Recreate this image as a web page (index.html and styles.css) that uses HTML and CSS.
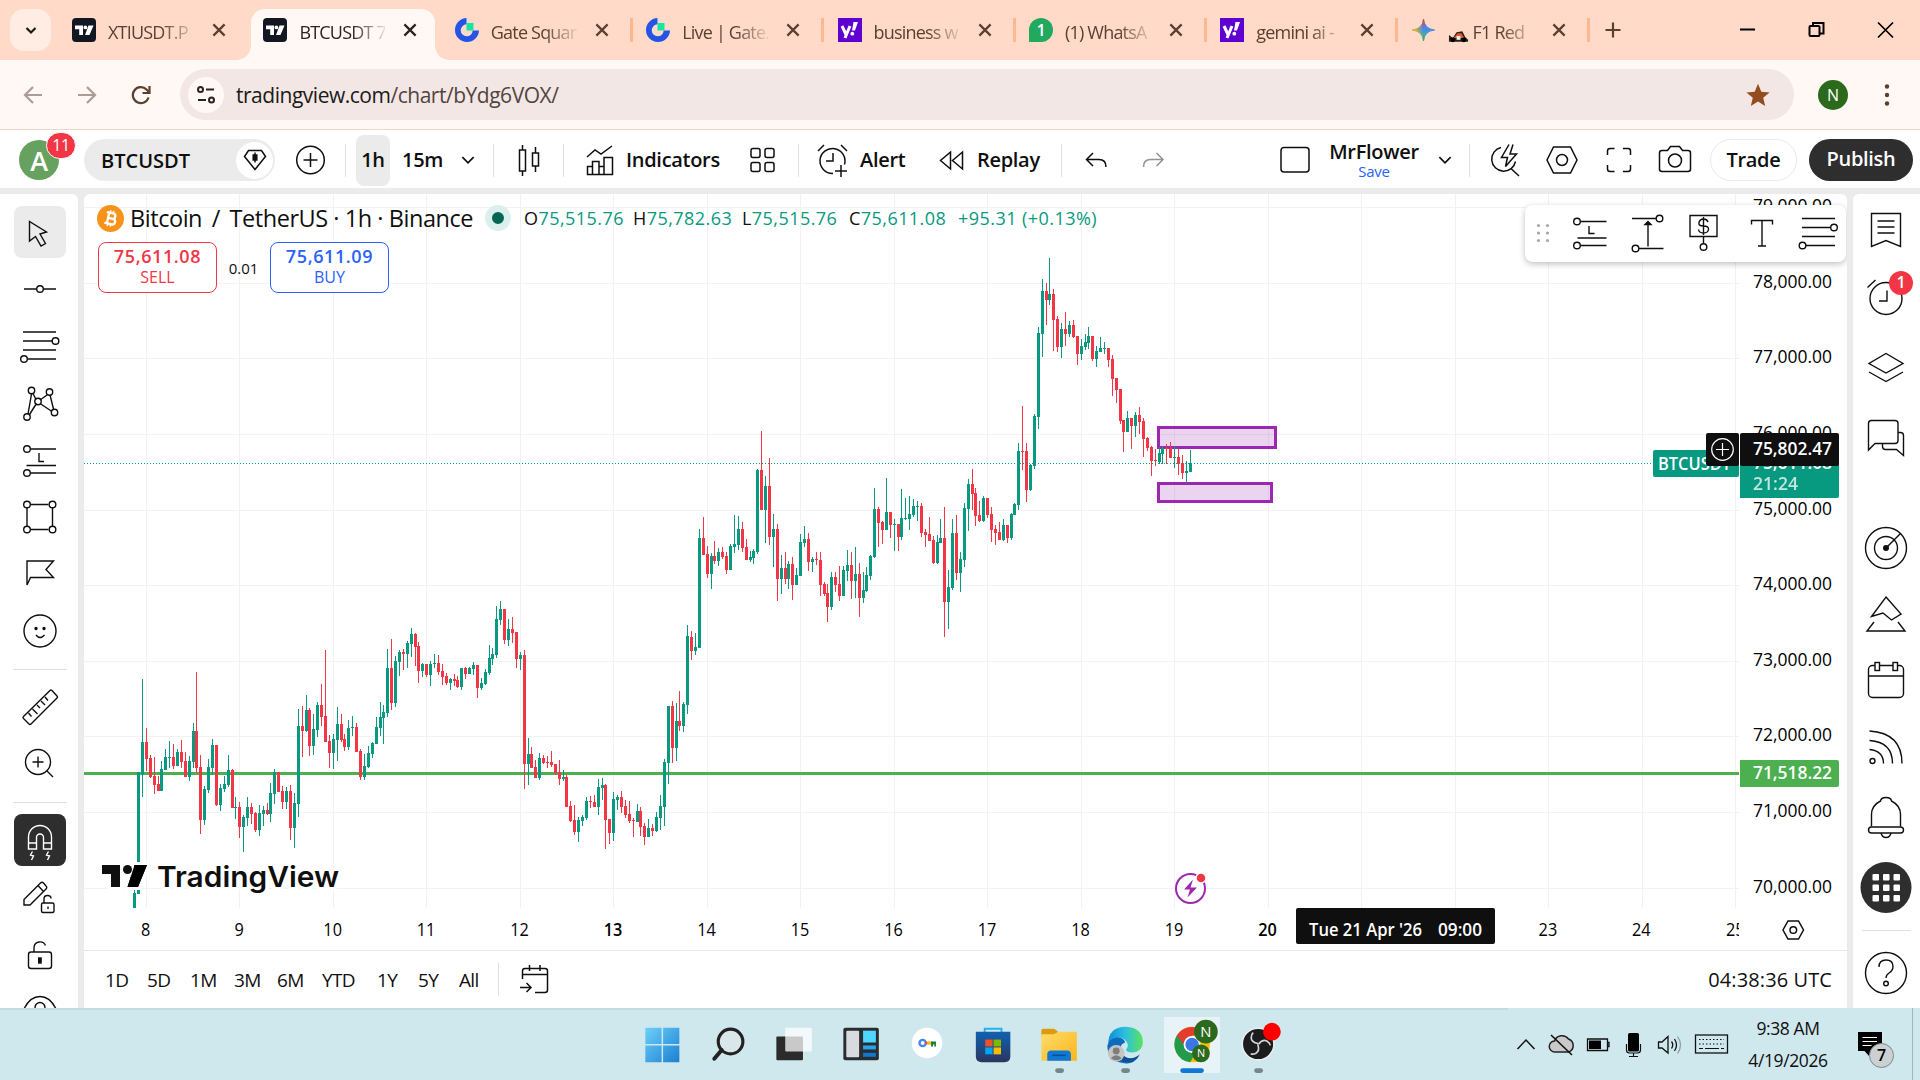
FILE: index.html
```html
<!DOCTYPE html>
<html lang="en">
<head>
    <meta charset="UTF-8">
    <meta name="viewport" content="width=device-width, initial-scale=1.0">
    <title>BTCUSDT 75,611.08</title>
    <link rel="stylesheet" href="styles.css">
</head>
<body>
    <svg class="defs" width="0" height="0">
        <defs>
            <symbol id="tv" viewBox="0 0 24 24">
                <rect width="24" height="24" rx="4" fill="#131722"/>
                <path d="M3 7.500h8v9.500H7.200v-5.700H3zM16.500 7.500H21.500L17.500 17h-4.500z" fill="#fff"/>
                <circle cx="13.400" cy="9.400" r="1.900" fill="#fff"/>
            </symbol>
            <symbol id="gate" viewBox="0 0 24 24">
                <path d="M11.500 0a12 12 0 1 0 12.500 12.500h-6.300A6 6 0 1 1 11.500 6.300z" fill="#2354e6"/>
                <rect x="11.500" y="5" width="7" height="7.500" fill="#17e6a1"/>
            </symbol>
            <symbol id="yahoo" viewBox="0 0 24 24">
                <rect width="24" height="24" fill="#5f01d1"/>
                <path d="M4 8l4 8.500M12 8L7 20" stroke="#fff" stroke-width="3" fill="none"/>
                <path d="M15.500 4h4.500l-3 8.500h-3z" fill="#fff"/>
                <circle cx="14.300" cy="15.700" r="1.900" fill="#fff"/>
            </symbol>
            <symbol id="x" viewBox="0 0 16 16">
                <path d="M3 3l10 10M13 3L3 13" stroke="currentColor" stroke-width="2" fill="none"/>
            </symbol>
            <symbol id="down" viewBox="0 0 16 16">
                <path d="M3 5.500l5 5 5-5" stroke="currentColor" stroke-width="1.500" fill="none"/>
            </symbol>
            <linearGradient id="gem" x1="0" y1="0" x2="0" y2="1">
                <stop offset="0" stop-color="#ea4335"/><stop offset=".4" stop-color="#4285f4"/><stop offset=".7" stop-color="#4aa3b5"/><stop offset="1" stop-color="#34a853"/>
            </linearGradient>
            <linearGradient id="gemL" x1="0" y1="0" x2="1" y2="0">
                <stop offset="0" stop-color="#fbbc04"/><stop offset=".5" stop-color="#fbbc04" stop-opacity="0"/>
            </linearGradient>
            <linearGradient id="win" x1="0" y1="0" x2="1" y2="1">
                <stop offset="0" stop-color="#6cd0fb"/><stop offset="1" stop-color="#1b7fd0"/>
            </linearGradient>
            <linearGradient id="edge" x1="0" y1="0" x2="1" y2="0">
                <stop offset="0" stop-color="#0f8fd8"/><stop offset=".5" stop-color="#2cc0de"/><stop offset="1" stop-color="#5be35a"/>
            </linearGradient>
            <linearGradient id="bag" x1="0" y1="0" x2="0" y2="1">
                <stop offset="0" stop-color="#0f62b0"/><stop offset="1" stop-color="#2a3560"/>
            </linearGradient>
            <linearGradient id="folder" x1="0" y1="0" x2="1" y2="1">
                <stop offset="0" stop-color="#ffdc6b"/><stop offset="1" stop-color="#fbb51c"/>
            </linearGradient>
        </defs>
    </svg>

    <div class="tabstrip">
        <div class="tab-search"><svg width="20" height="20" viewBox="0 0 20 20"><path d="M5.500 8l4.500 4.500L14.500 8" stroke="#1f1a17" stroke-width="2.200" fill="none"/></svg></div>
        <div class="tab"><svg class="fav"><use href="#tv"/></svg><span class="tab-title">XTIUSDT.P</span><svg class="close"><use href="#x"/></svg></div>
        <div class="tab active"><svg class="fav"><use href="#tv"/></svg><span class="tab-title">BTCUSDT 7</span><svg class="close"><use href="#x"/></svg></div>
        <div class="tab divided"><svg class="fav"><use href="#gate"/></svg><span class="tab-title">Gate Squar</span><svg class="close"><use href="#x"/></svg></div>
        <div class="tab divided"><svg class="fav"><use href="#gate"/></svg><span class="tab-title">Live | Gate.</span><svg class="close"><use href="#x"/></svg></div>
        <div class="tab divided"><svg class="fav"><use href="#yahoo"/></svg><span class="tab-title">business w</span><svg class="close"><use href="#x"/></svg></div>
        <div class="tab divided"><svg class="fav" viewBox="0 0 24 24"><path d="M0 24V12A12 12 0 1 1 12 24z" fill="#20a95f"/><text x="12" y="18" class="wa-num">1</text></svg><span class="tab-title">(1) WhatsA</span><svg class="close"><use href="#x"/></svg></div>
        <div class="tab divided"><svg class="fav"><use href="#yahoo"/></svg><span class="tab-title">gemini ai -</span><svg class="close"><use href="#x"/></svg></div>
        <div class="tab divided">
            <svg class="fav" viewBox="0 0 24 24"><path d="M11.500 1Q12.500 11 22.500 12 12.500 13 11.500 23 10.500 13 .5 12 10.500 11 11.500 1z" fill="url(#gem)" stroke="url(#gem)"/><path d="M11.500 1Q12.500 11 22.500 12 12.500 13 11.500 23 10.500 13 .5 12 10.500 11 11.500 1z" fill="url(#gemL)" stroke="url(#gemL)"/></svg>
            <span class="tab-title"><svg class="car" viewBox="0 0 22 14"><path d="M1 11V6l4 3 4-6 6-1 3 6 3 3v2H1z" fill="#222"/><path d="M6 9l4-5 4 0 3 5z" fill="#e8592b"/><path d="M9 7h4v4H9z" fill="#f5f0ec"/><circle cx="5" cy="11" r="2.500"/><circle cx="16.500" cy="11" r="2.500"/></svg> F1 Red</span>
            <svg class="close"><use href="#x"/></svg>
        </div>
        <div class="new-tab"><svg width="20" height="20" viewBox="0 0 20 20"><path d="M10 2.500v15M2.500 10h15" stroke="#5b4032" stroke-width="2.200"/></svg></div>
        <div class="win-buttons">
            <svg width="69" height="60" viewBox="0 0 69 60"><path d="M27 29.500h15" stroke="#000" stroke-width="2"/></svg>
            <svg width="69" height="60" viewBox="0 0 69 60" fill="none" stroke="#000" stroke-width="2"><rect x="27.500" y="26" width="10" height="10" rx="1"/><path d="M31 25.500V23h10.500v10.500H38"/></svg>
            <svg width="69" height="60" viewBox="0 0 69 60"><path d="M27 22.500l15 15M42 22.500l-15 15" stroke="#000" stroke-width="1.700"/></svg>
        </div>
    </div>

    <div class="urlbar">
        <svg width="54" height="40" viewBox="0 0 54 40" class="nav off"><path d="M42 20H25M33 12l-8 8 8 8"/></svg>
        <svg width="54" height="40" viewBox="0 0 54 40" class="nav off"><path d="M24 20h17M33 12l8 8-8 8"/></svg>
        <svg width="54" height="40" viewBox="0 0 54 40" class="nav"><path d="M40.500 22.500A8 8 0 1 1 38.500 14.500L41 17"/><path d="M41.500 11v7h-7"/></svg>
        <div class="omnibox">
            <div class="site-info"><svg width="22" height="20" viewBox="0 0 22 20"><g fill="none" stroke="#2b2320" stroke-width="2"><circle cx="5.500" cy="4.500" r="2.500"/><path d="M11 4.500h8M3 15h8"/><circle cx="16.500" cy="15" r="2.500"/></g></svg></div>
            <span class="url"><b>tradingview.com</b>/chart/bYdg6VOX/</span>
            <svg class="star" width="24" height="24" viewBox="0 0 24 24"><path d="M12 .8l3.300 8 8.300.6-6.400 5.400 2 8.300L12 18.600l-7.200 4.500 2-8.300L.4 9.400l8.300-.6z" fill="#924c1e"/></svg>
        </div>
        <div class="profile">N</div>
        <svg width="10" height="24" viewBox="0 0 10 24" fill="#5b4032"><circle cx="5" cy="3.500" r="2.200"/><circle cx="5" cy="12" r="2.200"/><circle cx="5" cy="20.500" r="2.200"/></svg>
    </div>

    <div class="header">
        <div class="avatar-cell"><div class="avatar">A</div><span class="badge">11</span></div>
        <div class="symbol">BTCUSDT<span class="gem"><svg width="26" height="26" viewBox="0 0 26 26" class="ico"><path d="M6.500 3.500h13l4 6L13 22.500 2.500 9.500z"/><path d="M13 5.500v10"/><rect x="11.200" y="8" width="3.600" height="5" fill="#0f0f0f"/></svg></span></div>
        <svg class="ico w70" viewBox="0 0 70 40"><circle cx="35.500" cy="20" r="13.800"/><path d="M35.500 13v14M28.500 20h14"/></svg>
        <i class="sep"></i>
        <span class="interval">1h</span>
        <span class="t-15">15m</span>
        <svg class="ico w18" viewBox="0 0 16 16"><use href="#down"/></svg>
        <i class="sep s2"></i>
        <svg class="ico w69" viewBox="0 0 69 40"><path d="M28.500 5v5M28.500 31v5M25.500 10h6v21h-6zM41.500 7v6M41.500 26v6M38.500 13h6v13h-6z"/></svg>
        <i class="sep"></i>
        <svg class="ico w28 ind" viewBox="0 0 28 32"><path d="M1 13l8-7 6 4L26 2M1.500 30.500v-8h5v-5h6.500v5h5v-9h8.500v17zM6.500 30.500v-8M13 30.500v-8M18 30.500v-8"/></svg>
        <span class="t-ind">Indicators</span>
        <svg class="ico w86" viewBox="0 0 86 40"><rect x="31" y="8.500" width="9" height="9" rx="2"/><rect x="45" y="8.500" width="9" height="9" rx="2"/><rect x="31" y="22.500" width="9" height="9" rx="2"/><rect x="45" y="22.500" width="9" height="9" rx="2"/></svg>
        <i class="sep"></i>
        <svg class="ico w34 al" viewBox="0 0 34 34"><path d="M17 30.500a12.500 12.500 0 1 1 11.500-9M17 10v8h-7M2 8l6-6M25 2l6 6M25 22v12M19 28h12"/></svg>
        <span class="t-alert">Alert</span>
        <svg class="ico w28" viewBox="0 0 28 32"><path d="M12.500 8v17L2.500 16.500zM24.500 8v17L14.500 16.500z"/></svg>
        <span class="t-replay">Replay</span>
        <i class="sep"></i>
        <svg class="ico w70" viewBox="0 0 70 40"><path d="M31 13l-6.500 6.500 6.500 6.500M24.500 19.500H37q7 0 7 7.500"/></svg>
        <svg class="ico w40 dim" viewBox="0 0 40 40"><path d="M24.500 13l6.500 6.500-6.500 6.500M31 19.500H18.500q-7 0-7 7.500"/></svg>
        <span class="grow"></span>
        <svg class="ico w34b" viewBox="0 0 34 34"><rect x="3" y="4.500" width="28" height="24.500" rx="3"/></svg>
        <div class="layout-name"><span>MrFlower</span><small>Save</small></div>
        <svg class="ico w18 ch2" viewBox="0 0 16 16"><use href="#down"/></svg>
        <i class="sep s3"></i>
        <svg class="ico w69c" viewBox="0 0 69 40"><path d="M32 7.500a12 12 0 1 0 14.500 14M42.500 29l7.500 7M40 4.500l-7.500 13h6l-2 9L47.500 14h-6.500l3-9.500"/></svg>
        <svg class="ico w50" viewBox="0 0 50 40"><path d="M16.500 7h17L40 20l-6.500 13h-17L10 20z"/><circle cx="25" cy="20" r="5.500"/></svg>
        <svg class="ico w64" viewBox="0 0 64 40"><path d="M20.500 15v-4q0-2.500 2.500-2.500h4.500M36 8.500h5q2.500 0 2.500 2.500v4M43.500 25v4q0 2.500-2.500 2.500h-5M27.500 31.500H23q-2.500 0-2.500-2.500v-4"/></svg>
        <svg class="ico w50b" viewBox="0 0 50 40"><path d="M9.500 13q0-2.500 2.500-2.500h5.500l3-4h9l3 4H38q2.500 0 2.500 2.500v16q0 2.500-2.500 2.500H12q-2.500 0-2.500-2.500z"/><circle cx="25" cy="20.500" r="6.500"/></svg>
        <span class="trade">Trade</span>
        <span class="publish">Publish</span>
    </div>

    <div class="workspace">
        <div class="left-tools">
            <svg class="sel" viewBox="0 0 52 52"><path d="M15.500 15.500v19.500l6-4.500 5.500 9.500 4.500-2.500-5.500-9.500 6.500-2z"/></svg>
            <svg viewBox="0 0 52 52"><path d="M10 26h12.500M29.500 26H42"/><circle cx="26" cy="26" r="3.300"/></svg>
            <svg viewBox="0 0 52 52"><path d="M9 12h33M9 21h29.500M9 30h33M13.500 39H42"/><circle cx="41.500" cy="21" r="3.300"/><circle cx="10" cy="39" r="3.300"/></svg>
            <svg viewBox="0 0 52 52"><path d="M17.500 17L14 37M19 16.500l3 6M26 23l7-5M36 18l3.500 14M15.500 37.500l7-11M26 26.500l12 8"/><circle cx="17.500" cy="13.500" r="3.200"/><circle cx="35.500" cy="15" r="3.200"/><circle cx="24" cy="24.500" r="3.200"/><circle cx="13" cy="40" r="3.200"/><circle cx="40.500" cy="35.500" r="3.200"/></svg>
            <svg viewBox="0 0 52 52"><path d="M16.500 15H42M12.500 31.500H42M16.500 39H42M25 19v8.500h5"/><circle cx="13" cy="15" r="3.300"/><circle cx="13" cy="39" r="3.300"/></svg>
            <svg viewBox="0 0 52 52"><path d="M16.500 13.500h18M13 17v18M38.500 17v18M16.500 38.500h18"/><circle cx="13" cy="13.500" r="3.300"/><circle cx="38.500" cy="13.500" r="3.300"/><circle cx="13" cy="38.500" r="3.300"/><circle cx="38.500" cy="38.500" r="3.300"/></svg>
            <svg viewBox="0 0 52 52"><path d="M13 13h26.500l-7.500 8.500 7.500 8H16.500L13 37z"/></svg>
            <svg viewBox="0 0 52 52"><circle cx="26" cy="26" r="16"/><path d="M22 30q4 5 8.500 0"/><circle cx="22" cy="23.500" r="1" class="dot"/><circle cx="30" cy="23.500" r="1" class="dot"/></svg>
            <i></i>
            <svg viewBox="0 0 52 52"><path d="M9.500 35.500L36 9.500q1-1 2 0l5 5.500q1 1 0 2L17 43q-1 1-2 0l-5.500-5.500q-1-1 0-2zM14.500 32l3 3.500M18.500 28l5 5M23 24l3 3M27 20l4 4M31 16l3 3.500"/></svg>
            <svg viewBox="0 0 52 52"><circle cx="24" cy="24" r="12.500"/><path d="M33 33l6 6M24 18.500v11M18.500 24h11"/></svg>
            <i></i>
            <svg class="sel dark" viewBox="0 0 52 52"><path d="M14.500 35V23a11.500 11.500 0 0 1 23 0v12h-8V23.500a3.500 3.500 0 0 0-7 0V35zM14.500 29h8M29.500 29h8M18.500 37.500l-2 3.500 3 1-2 4M34.500 37.500l-2 3.500 3 1-2 4"/></svg>
            <svg viewBox="0 0 52 52"><path d="M10 34v-5.500L26.500 12q1.500-1.500 3 0l2.500 3q1.500 1.500 0 3L16 34zM24 14.500l5.500 6"/><rect x="27.500" y="32" width="12.500" height="9.500" rx="1.500"/><path d="M30 32v-4q0-3.500 3.500-3.500T37 27.500M34 35.500v2.500"/></svg>
            <svg viewBox="0 0 52 52"><rect x="14.500" y="24" width="23" height="16.500" rx="2.500"/><path d="M20 24v-4.500a6 6 0 0 1 11.500-2"/><rect x="24.700" y="30" width="2.400" height="5" class="dot"/></svg>
            <svg viewBox="0 0 52 52"><path d="M10 24q6-12.500 16-12.500T42 24q-6 12-16 12T10 24z"/><circle cx="26" cy="22.500" r="5"/></svg>
        </div>

        <div class="chart">
            <svg id="plot" width="1763" height="756" viewBox="84 194 1763 756"></svg>
            <div class="legend">
                <svg width="27" height="27" viewBox="0 0 27 27"><circle cx="13.500" cy="13.500" r="13.500" fill="#f7931a"/><g transform="rotate(13 13.500 13.500)" fill="none" stroke="#fff" stroke-width="2.300"><path d="M11 8v11M8.500 8h6.500a2.700 2.700 0 0 1 0 5.400H11h5a2.800 2.800 0 0 1 0 5.600H8.500"/><path d="M12 5.500V8M15 5.500V8M12 19v2.500M15 19v2.500" stroke-width="1.600"/></g></svg>
                <span class="pair">Bitcoin <i>/</i> TetherUS · 1h · Binance</span>
                <span class="live"></span>
                <span class="ohlc">O<em>75,515.76</em></span><span class="ohlc">H<em>75,782.63</em></span><span class="ohlc l">L<em>75,515.76</em></span><span class="ohlc">C<em>75,611.08</em></span><span class="ohlc"><em>+95.31 (+0.13%)</em></span>
            </div>
            <div class="order">
                <div class="sell"><b>75,611.08</b>SELL</div>
                <span>0.01</span>
                <div class="buy"><b>75,611.09</b>BUY</div>
            </div>
            <div class="float-tools">
                <svg class="grip" viewBox="0 0 36 57"><g fill="#a8a8a8"><circle cx="13.500" cy="20.500" r="1.600"/><circle cx="22.500" cy="20.500" r="1.600"/><circle cx="13.500" cy="28" r="1.600"/><circle cx="22.500" cy="28" r="1.600"/><circle cx="13.500" cy="35.500" r="1.600"/><circle cx="22.500" cy="35.500" r="1.600"/></g></svg>
                <svg viewBox="0 0 57 57"><path d="M19.500 16.500h26M16.500 33h29M19.500 40.500h26M28 21v7.500h5.500"/><circle cx="16" cy="16.500" r="3.300"/><circle cx="16" cy="40.500" r="3.300"/></svg>
                <svg viewBox="0 0 57 57"><path d="M14 13.500h24.500M21 43.500h24.500M30 41.500V18"/><path d="M27 19.500h6L30 16.500z" class="dot"/><circle cx="41.500" cy="13.500" r="3.300"/><circle cx="17.500" cy="43.500" r="3.300"/></svg>
                <svg viewBox="0 0 57 57"><path d="M15 10.500h27v21H15zM28.500 31.500v7"/><circle cx="28.500" cy="42" r="3.300"/><path d="M33 17q-1-3-4.500-3t-4.500 3.500 4.500 3.500 5 3.500-5 3.500-5-3.500M28.500 12v18"/></svg>
                <svg viewBox="0 0 57 57"><path d="M19.500 19.500v-4h21v4M30 15.500V41M26 41h8"/></svg>
                <svg viewBox="0 0 57 57"><path d="M13 13.500h33M13 22.500h28.500M13 31.500h33M17 40.500h29"/><circle cx="45" cy="22.500" r="3.300"/><circle cx="13.500" cy="40.500" r="3.300"/></svg>
            </div>
            <div class="bottom-bar">
                <div class="ranges"><span>1D</span><span>5D</span><span>1M</span><span>3M</span><span>6M</span><span>YTD</span><span>1Y</span><span>5Y</span><span>All</span></div>
                <i class="sep"></i>
                <svg width="30" height="30" viewBox="0 0 30 30" class="ico"><path d="M3.500 14V6q0-2.500 2.500-2.500h20q2.500 0 2.500 2.500v19q0 2.500-2.500 2.500h-10M3.500 9.500h25M10.500 0v6M21 0v6M1 22.500h11M7.500 18l4.500 4.500L7.500 27"/></svg>
                <span class="clock">04:38:36 UTC</span>
            </div>
        </div>

        <div class="right-tools">
            <svg viewBox="0 0 67 68"><path d="M18.500 17.500h29v33L33 44.500l-14.500 6zM24.500 25h17M24.500 31h17M24.500 37h17"/></svg>
            <div class="alarm"><svg viewBox="0 0 67 68"><circle cx="33" cy="34.500" r="16"/><path d="M34 26.500v10.500h-8M14.500 23.500l8-7.500"/></svg><b>1</b></div>
            <svg viewBox="0 0 67 68"><path d="M33 21.500l17 10-17 9.500-17-9.500zM16 40l17 9.500L50 40"/></svg>
            <svg viewBox="0 0 67 68"><path d="M15.500 50V23.500q0-3 3-3H42q3 0 3 3v17q0 3-3 3H22zM45 32.500h2.500q3 0 3 3V55.500l-7-6H32.500q-3 0-3-3v-3"/></svg>
            <i class="gap"></i>
            <svg viewBox="0 0 67 68"><circle cx="33" cy="34" r="20.500"/><circle cx="33" cy="34" r="11.500"/><circle cx="33" cy="34" r="2.300" class="dot"/><path d="M33 34l14.500-14.500"/></svg>
            <svg viewBox="0 0 67 68"><path d="M33 15l15 17-9.500 6-8.500-7-11.500 3.500zM21 40l-7 9h38l-7-9"/></svg>
            <svg viewBox="0 0 67 68"><rect x="15.500" y="16.500" width="35" height="32" rx="4"/><path d="M15.500 27h35"/><rect x="22" y="13.500" width="4.500" height="8" fill="#fff"/><rect x="40" y="13.500" width="4.500" height="8" fill="#fff"/></svg>
            <svg viewBox="0 0 67 68"><path d="M16.500 14Q49 16 49 46.500M16.500 23.500Q39.500 25 39.500 46.500M16.500 32.500Q30.500 34 30.500 46.500"/><circle cx="19.500" cy="44" r="2.500"/></svg>
            <svg viewBox="0 0 67 68"><path d="M18.500 42.500V30.500q0-9 9-13.500.5-3.500 5.500-3.500t5.500 3.500q9 4.500 9 13.500v12"/><rect x="15.500" y="43" width="35" height="6" rx="3"/><path d="M28 49q1 4.500 5 4.500t5-4.500"/></svg>
            <svg viewBox="0 0 67 68"><circle cx="33" cy="35.500" r="25.500" fill="#2e2e2e" stroke="none"/><g fill="#fff" stroke="none"><rect x="19.500" y="22" width="6.500" height="6.500" rx="1"/><rect x="30" y="22" width="6.500" height="6.500" rx="1"/><rect x="40.500" y="22" width="6.500" height="6.500" rx="1"/><rect x="19.500" y="32.500" width="6.500" height="6.500" rx="1"/><rect x="30" y="32.500" width="6.500" height="6.500" rx="1"/><rect x="40.500" y="32.500" width="6.500" height="6.500" rx="1"/><rect x="19.500" y="43" width="6.500" height="6.500" rx="1"/><rect x="30" y="43" width="6.500" height="6.500" rx="1"/><rect x="40.500" y="43" width="6.500" height="6.500" rx="1"/></g></svg>
            <i class="line"></i>
            <svg viewBox="0 0 67 68"><circle cx="33" cy="34" r="20.500"/><path d="M26 28q0-7 7-7t7 6.500q0 4-4 6.500-3 2-3 5"/><circle cx="33" cy="44.500" r="2.300"/></svg>
        </div>
    </div>

    <div class="taskbar">
        <div class="apps">
            <svg viewBox="0 0 66 72"><g fill="url(#win)"><path d="M16 20h16.500v16.500H16zM34 20h16.500v16.500H34zM16 38h16.500v17H16zM34 38h16.500v17H34z"/></g></svg>
            <svg viewBox="0 0 66 72"><circle cx="35.500" cy="34" r="12.500" fill="#d9e6ea" stroke="#222" stroke-width="3.200"/><path d="M26.500 42.500L19 51.500" stroke="#222" stroke-width="4" stroke-linecap="round"/></svg>
            <svg viewBox="0 0 66 72"><rect x="15" y="29" width="27" height="24" rx="1" fill="#2b2b2b"/><rect x="24" y="20" width="27" height="24" rx="1" fill="#fff" fill-opacity=".75"/></svg>
            <svg viewBox="0 0 66 72"><rect x="15" y="20" width="36" height="33" rx="2" fill="#2a2d30"/><rect x="18" y="23" width="13" height="27" rx="1" fill="#d8dadf"/><rect x="35" y="23" width="13" height="12" fill="#4fd6ff"/><rect x="35" y="38" width="13" height="4" fill="#29a4e6"/><rect x="35" y="45.500" width="13" height="4" fill="#0f78d4"/></svg>
            <svg viewBox="0 0 66 72"><circle cx="33" cy="35.500" r="15.500" fill="#fff"/><circle cx="28.500" cy="35.500" r="3.200" fill="none" stroke="#4285f4" stroke-width="2.400"/><path d="M31 35.500h5" stroke="#ea4335" stroke-width="2.500"/><path d="M33 35.500h6" stroke="#fbbc04" stroke-width="3"/><path d="M37 34h5v5h-1.700v-2h-1.300v2h-2z" fill="#188038"/></svg>
            <svg viewBox="0 0 66 72"><path d="M24.500 25v-4h17v4" fill="none" stroke="#25b2ee" stroke-width="2"/><path d="M15.500 24h35v25q0 6-6 6h-23q-6 0-6-6z" fill="url(#bag)"/><path d="M25 32h7.500v7H25z" fill="#f25022"/><path d="M33.500 32H41v7h-7.500z" fill="#7fba00"/><path d="M25 40h7.500v7H25z" fill="#00a4ef"/><path d="M33.500 40H41v7h-7.500z" fill="#ffb900"/></svg>
            <svg viewBox="0 0 66 72"><path d="M15 23q0-2 2-2h11l4 3v6H15z" fill="#dd9a0a"/><path d="M15 26.500h13l4-2.500h19v29.500H15z" fill="url(#folder)"/><path d="M21 53.500V47q0-4 4-4h16q4 0 4 4v6.500z" fill="#0f78d4"/><path d="M26 48h14" stroke="#0a4d91" stroke-width="1.500"/><rect x="29" y="61" width="9" height="5" rx="2.500" fill="#75868b"/></svg>
            <svg viewBox="0 0 66 72"><path d="M16 38Q15 19 34 19q17 1 17 16 0 9-10 10-7 0-7-3 3-3 1-7-4-7-12-4-5 2-7 7z" fill="url(#edge)"/><path d="M15 38q2-7 10-8 7 0 8 5-8 3-3 11 6 9 17 3-6 9-15 7Q15 54 15 38z" fill="#0f6cbd"/><path d="M29 38q-3 8 4 12 8 3 15-3-4 8-12 8-10 0-13-8 0-8 6-9z" fill="#134d93"/><circle cx="24" cy="46" r="8.500" fill="#c5c5c5"/><circle cx="24" cy="43.500" r="3.500" fill="#7d7d7d"/><path d="M18.500 51q5.500-6 11 0-5 4-11 0z" fill="#7d7d7d"/><rect x="29" y="61" width="9" height="5" rx="2.500" fill="#75868b"/></svg>
            <div class="app-on"><svg viewBox="0 0 66 72"><circle cx="33" cy="37" r="18" fill="#fbbc04"/><path d="M17.500 28A18 18 0 0 0 31 55l7-12-5-6z" fill="#229a4c"/><path d="M33 28h15.500A18 18 0 0 0 17.500 28l8 10z" fill="#e33b2e"/><circle cx="33" cy="37" r="8.600" fill="#fff"/><circle cx="33" cy="37" r="6.800" fill="#3b78e7"/><circle cx="47" cy="24" r="12" fill="#2b6a1d"/><text x="47" y="29" class="n1">N</text><circle cx="42" cy="46" r="9" fill="#2b6a1d"/><text x="42" y="50" class="n2">N</text><rect x="21" y="61" width="24" height="5" rx="2.500" fill="#0f78d4"/></svg></div>
            <svg viewBox="0 0 66 72"><circle cx="33" cy="36.500" r="16" fill="#1c1b1d" stroke="#eee" stroke-width="1.500"/><g fill="none" stroke="#d5d5d5" stroke-width="1.700"><path d="M33 36q-7-1-7-6 0-3 2-5"/><path d="M33 36q-7-1-7-6 0-3 2-5" transform="rotate(120 33 36.500)"/><path d="M33 36q-7-1-7-6 0-3 2-5" transform="rotate(240 33 36.500)"/></g><circle cx="47" cy="24" r="9" fill="#f00"/><rect x="29" y="61" width="9" height="5" rx="2.500" fill="#75868b"/></svg>
        </div>
        <div class="tray">
            <svg viewBox="0 0 36 36"><path d="M9.500 23l8.500-9 8.500 9" fill="none" stroke="#111" stroke-width="1.500"/></svg>
            <svg viewBox="0 0 36 36"><path d="M11 26a5.500 5.500 0 0 1-.5-11 8 8 0 0 1 14-2 7 7 0 0 1 .5 13z" fill="#c9c9c9" stroke="#222" stroke-width="1.500"/><path d="M7 9l21 20" stroke="#111" stroke-width="1.600"/></svg>
            <svg viewBox="0 0 36 36"><path d="M7.500 13h20v11.500h-20zM27.500 16.500h1.500v4h-1.500" fill="none" stroke="#111" stroke-width="1.300"/><path d="M9 14.500h12V23H9z"/></svg>
            <svg viewBox="0 0 36 36"><rect x="12" y="7" width="11" height="18.500" rx="1.500"/><path d="M10.500 18v6q0 3 3 3h8q3 0 3-3v-6M17.500 27v3.500M13 30.500h9" fill="none" stroke="#111" stroke-width="1.200"/></svg>
            <svg viewBox="0 0 36 36" fill="none" stroke="#111" stroke-width="1.300"><path d="M6.500 16v6h3.500l6 5V10.500L10 16zM19.500 15.500q2.500 3 0 7M22.500 13q4 6 0 12"/><path d="M25.500 10.500q6 8.500 0 17" stroke="#8da0a6"/></svg>
            <svg class="kb" viewBox="0 0 48 36"><rect x="7.500" y="9" width="32" height="18" fill="none" stroke="#111" stroke-width="1.300"/><path d="M11 13.500h25M11 18h25" stroke="#111" stroke-dasharray="1.500 2"/><path d="M11 22.500h4M17 22.500h14M33 22.500h3" stroke="#111"/></svg>
            <div class="time"><span>9:38 AM</span><span>4/19/2026</span></div>
            <svg class="notif" viewBox="0 0 66 72"><path d="M12 24h24v19H26.500L23 48l-4.500-5H12z"/><path d="M16.500 29.500H31M16.500 33.500H31M16.500 37.500h9" stroke="#fff" stroke-width="1.200"/><circle cx="35.500" cy="47.500" r="12" fill="#ccd0d2" stroke="#7f898c"/><text x="35.500" y="53" class="seven">7</text></svg>
        </div>
    </div>
    <script src="chart.js"></script>
</body>
</html>
```

FILE: styles.css
```css
* {
    box-sizing: border-box;
}
body {
    margin: 0;
    width: 1920px;
    height: 1080px;
    overflow: hidden;
    font-family: "Open Sans", "Noto Sans", sans-serif;
    color: #0f0f0f;
    background: #fff;
}
svg {
    flex: none;
    display: block;
}
.defs {
    position: absolute;
}

/* browser tabs */
.tabstrip {
    display: flex;
    height: 60px;
    background: #ffdac8;
}
.tab-search {
    width: 41px;
    height: 42px;
    margin: 9px 9px 0 10px;
    border-radius: 14px;
    background: #ffece2;
    display: flex;
    align-items: center;
    justify-content: center;
}
.tab {
    width: 191.400px;
    height: 60px;
    padding-left: 12px;
    display: flex;
    align-items: center;
    flex: none;
    color: #5b4032;
    position: relative;
}
.tab.active {
    color: #2b2320;
    height: 51px;
    margin-top: 9px;
    padding-bottom: 9px;
}
.tab.active::before {
    content: "";
    position: absolute;
    inset: 0 8px 0 0;
    border-radius: 14px 14px 0 0;
    background: #fff8f5;
}
.tab.active::after {
    content: "";
    position: absolute;
    left: -14px;
    right: -6px;
    bottom: 0;
    height: 14px;
    background: radial-gradient(circle at 0 0, transparent 13.500px, #fff8f5 14px) 0 0 / 14px 14px no-repeat,
        radial-gradient(circle at 100% 0, transparent 13.500px, #fff8f5 14px) 100% 0 / 14px 14px no-repeat;
}
.tab.active > * {
    z-index: 1;
}
.tab.divided {
    background: linear-gradient(#ffb78c, #ffb78c) 187px 18px / 3px 24px no-repeat;
}
.fav {
    width: 24px;
    height: 24px;
}
.tab-title {
    width: 86px;
    margin-left: 12px;
    font-size: 18px;
    letter-spacing: -0.800px;
    white-space: nowrap;
    overflow: hidden;
    padding-top: 3px;
    -webkit-mask-image: linear-gradient(90deg, #000 62%, rgba(0, 0, 0, .1));
    mask-image: linear-gradient(90deg, #000 62%, rgba(0, 0, 0, .1));
}
.close {
    width: 18px;
    height: 18px;
    margin-left: 16px;
}
.car {
    width: 21px;
    height: 14px;
    display: inline-block;
    vertical-align: -4px;
}
.wa-num {
    font-size: 16px;
    font-weight: 600;
    fill: #fff;
    text-anchor: middle;
}
.new-tab {
    display: flex;
    align-items: center;
    margin-left: 12px;
}
.win-buttons {
    display: flex;
    margin-left: auto;
}

/* address bar */
.urlbar {
    display: flex;
    align-items: center;
    height: 70px;
    background: #fff8f5;
    border-bottom: 1px solid #f0d5cb;
}
.nav {
    fill: none;
    stroke: #5b4032;
    stroke-width: 2.200;
}
.nav.off {
    stroke: #ab9c96;
}
.omnibox {
    display: flex;
    align-items: center;
    width: 1614px;
    height: 51px;
    margin-left: 18px;
    padding: 0 24px 0 8px;
    border-radius: 26px;
    background: #f2e7e4;
}
.site-info {
    width: 36px;
    height: 36px;
    border-radius: 50%;
    background: #fff8f5;
    display: flex;
    align-items: center;
    justify-content: center;
}
.url {
    margin-left: 12px;
    font-size: 21px;
    color: #52443f;
    letter-spacing: -0.480px;
}
.url b {
    font-weight: 400;
    color: #201a18;
}
.star {
    margin-left: auto;
}
.profile {
    width: 30px;
    height: 30px;
    margin: 0 34px 0 24px;
    border-radius: 50%;
    background: #2b6a1d;
    color: #fff;
    font-size: 16px;
    line-height: 30px;
    text-align: center;
}

/* chart header */
.header {
    display: flex;
    align-items: center;
    height: 58px;
    padding-top: 2px;
    font-size: 20px;
    font-weight: 600;
    letter-spacing: -0.300px;
}
.header > span {
    padding-bottom: 2px;
}
.ico {
    fill: none;
    stroke: #0f0f0f;
    stroke-width: 1.500;
}
.dim {
    opacity: .45;
}
.avatar-cell {
    width: 84px;
    height: 40px;
    padding-left: 19px;
    position: relative;
}
.avatar {
    width: 40px;
    height: 40px;
    border-radius: 50%;
    background: #66a15f;
    color: #fff;
    font-size: 27px;
    line-height: 41px;
    text-align: center;
}
.badge {
    position: absolute;
    left: 46px;
    top: -8px;
    width: 30px;
    height: 27px;
    border: 1.500px solid #fff;
    border-radius: 14px;
    background: #f23645;
    color: #fff;
    font-size: 16px;
    font-weight: 400;
    line-height: 24px;
    text-align: center;
}
.symbol {
    display: flex;
    align-items: center;
    justify-content: space-between;
    width: 191px;
    height: 42px;
    padding: 0 2px 0 17px;
    border-radius: 21px;
    background: #ebebeb;
    letter-spacing: 0;
}
.gem {
    width: 37px;
    height: 37px;
    border-radius: 50%;
    background: #fff;
    display: flex;
    align-items: center;
    justify-content: center;
}
.sep {
    width: 1px;
    height: 33px;
    flex: none;
    background: #e0e0e0;
}
.w70 { width: 70px; height: 40px; }
.w69 { width: 69px; height: 40px; }
.w69c { width: 69px; height: 40px; margin-left: -1px; }
.w64 { width: 64px; height: 40px; }
.w86 { width: 86px; height: 40px; margin-right: -8px; }
.w50, .w50b { width: 50px; height: 40px; }
.w50 { margin-left: -1px; }
.w50b { margin-left: -1px; margin-right: 10px; }
.w40 { width: 40px; height: 40px; }
.w34, .w34b { width: 34px; height: 34px; }
.w28 { width: 28px; height: 32px; }
.w18 { width: 18px; height: 18px; }
.interval {
    width: 34px;
    height: 51px;
    margin-left: 10px;
    border-radius: 8px;
    background: #ebebeb;
    line-height: 50px;
    text-align: center;
}
.t-15 {
    width: 57px;
    margin-left: 12px;
}
.s2 {
    margin-left: 16px;
}
.ind {
    margin-left: 22px;
}
.t-ind {
    width: 93px;
    margin-left: 12px;
    margin-right: 1px;
}
.al {
    margin-left: 17px;
}
.t-alert {
    width: 78px;
    margin-left: 10px;
}
.t-replay {
    width: 84px;
    margin-left: 11px;
}
.grow {
    flex: 1;
}
.layout-name {
    display: flex;
    flex-direction: column;
    align-items: center;
    width: 88px;
    margin-left: 18px;
    line-height: 22px;
}
.layout-name small {
    font-size: 15px;
    font-weight: 400;
    line-height: 17px;
    color: #2962ff;
}
.ch2 {
    margin-left: 18px;
}
.s3 {
    margin-left: 15px;
}
.trade, .publish {
    height: 42px;
    border-radius: 21px;
    line-height: 40px;
    text-align: center;
}
.trade {
    width: 87px;
    border: 1px solid #ebebeb;
}
.publish {
    width: 104px;
    margin: 0 7px 0 12px;
    background: #2e2e2e;
    color: #fff;
}

/* panels */
.workspace {
    display: flex;
    gap: 6px;
    height: 820px;
    padding-top: 6px;
    background: #ebebeb;
}
.left-tools, .right-tools {
    display: flex;
    flex-direction: column;
    align-items: center;
    background: #fff;
    overflow: hidden;
}
.left-tools {
    width: 78px;
    padding: 12px 0 0 1px;
    border-radius: 0 6px 0 0;
}
.left-tools svg {
    width: 52px;
    height: 52px;
    margin-bottom: 5px;
    border-radius: 8px;
}
.left-tools svg, .right-tools svg, .float-tools svg {
    fill: none;
    stroke: #0f0f0f;
    stroke-width: 1.400;
}
.left-tools .dot, .right-tools .dot, .float-tools .dot {
    fill: #0f0f0f;
}
.left-tools .sel {
    background: #ebebeb;
}
.left-tools .dark {
    background: #2e2e2e;
    stroke: #fff;
}
.left-tools i {
    width: 54px;
    height: 1px;
    margin: 7px 0 11px;
    background: #e0e0e0;
    flex: none;
}
.chart {
    position: relative;
    width: 1763px;
    background: #fff;
    border-radius: 6px 6px 0 0;
    overflow: hidden;
}
.right-tools {
    width: 67px;
    padding-top: 2px;
    border-radius: 6px 0 0 0;
}
.right-tools svg {
    width: 67px;
    height: 68px;
}
.right-tools .gap {
    height: 46px;
    flex: none;
}
.right-tools .gap ~ svg {
    margin-bottom: -0.500px;
}
.right-tools .line {
    width: 49px;
    height: 1px;
    margin: 11px 0 8px;
    background: #e0e0e0;
    flex: none;
}
.alarm {
    position: relative;
}
.alarm b {
    position: absolute;
    left: 36px;
    top: 7px;
    width: 24px;
    height: 24px;
    border-radius: 50%;
    background: #f23645;
    color: #fff;
    font-size: 16px;
    font-weight: 600;
    line-height: 23px;
    text-align: center;
}
.legend {
    position: absolute;
    left: 13px;
    top: 9px;
    display: flex;
    align-items: center;
    height: 30px;
    font-size: 18px;
    white-space: nowrap;
}
.pair {
    width: 345px;
    margin-left: 6px;
    font-size: 23.500px;
    letter-spacing: -0.450px;
}
.pair i {
    font-style: normal;
    margin: 0 4px;
}
.live {
    width: 26px;
    height: 26px;
    margin: 0 13px 0 10px;
    border: 7px solid #dbf0ed;
    border-radius: 50%;
    background: #056656;
}
.ohlc {
    width: 109px;
    letter-spacing: 0.450px;
}
.ohlc.l {
    width: 107px;
}
.ohlc em {
    font-style: normal;
    color: #089981;
}
.order {
    position: absolute;
    left: 14px;
    top: 48px;
    display: flex;
    align-items: center;
    font-size: 15px;
}
.order span {
    width: 53px;
    text-align: center;
}
.sell, .buy {
    width: 119px;
    height: 51px;
    padding-top: 4px;
    border: 1px solid #f23645;
    border-radius: 8px;
    background: #fff;
    color: #f23645;
    font-size: 16px;
    line-height: 20px;
    text-align: center;
}
.sell b, .buy b {
    display: block;
    margin-top: -1px;
    margin-bottom: 1px;
    font-size: 18px;
    font-weight: 600;
    letter-spacing: 0.600px;
}
.buy {
    border-color: #2962ff;
    color: #2962ff;
}
.float-tools {
    position: absolute;
    left: 1441px;
    top: 11px;
    display: flex;
    width: 321px;
    height: 57px;
    border-radius: 8px;
    background: #fff;
    box-shadow: 0 2px 6px rgba(0, 0, 0, .25);
}
.float-tools svg {
    width: 57px;
    height: 57px;
}
.float-tools .grip {
    width: 36px;
    stroke: none;
}
.bottom-bar {
    display: flex;
    align-items: center;
    height: 58px;
    padding: 0 15px 0 21px;
    border-top: 1px solid #e6e6e6;
    font-size: 19px;
}
.bottom-bar .sep {
    margin-right: 20px;
}
.ranges {
    display: grid;
    grid-template-columns: 42px 43px 44px 43px 45px 55px 41px 41px 39px;
    letter-spacing: -0.700px;
}
.clock {
    margin-left: auto;
    font-size: 20px;
    letter-spacing: 0.100px;
}

/* plot texts */
.axis {
    font-size: 18px;
}
.bold {
    font-weight: 600;
}
.mid {
    text-anchor: middle;
}
.white {
    fill: #fff;
}
.logo {
    font-family: Inter, sans-serif;
    font-size: 29px;
    font-weight: 600;
}
.halo {
    fill: #0f0f0f;
    stroke: #fff;
    stroke-width: 6px;
    paint-order: stroke;
}

/* windows taskbar */
.taskbar {
    display: flex;
    height: 72px;
    background: linear-gradient(#c3dbe1, #c3dbe1) 0 0 / 1508px 2px no-repeat, #cfe8ee;
}
.apps {
    display: flex;
    margin-left: 629px;
}
.apps svg {
    width: 66.200px;
    height: 71px;
}
.app-on {
    background: linear-gradient(#e7f3f7, #e7f3f7) 5px 9px / 56px 56px no-repeat;
}
.n1, .n2, .seven {
    fill: #fff;
    font-size: 15px;
    text-anchor: middle;
}
.n2 {
    font-size: 11px;
}
.seven {
    fill: #000;
    font-size: 16px;
    font-weight: 600;
}
.tray {
    display: flex;
    align-items: center;
    margin-left: auto;
    border-right: 1px solid #9fb6bc;
    margin-right: 7px;
}
.tray svg {
    width: 36px;
    height: 36px;
}
.tray .kb {
    width: 48px;
}
.time {
    display: flex;
    flex-direction: column;
    align-items: center;
    width: 110px;
    padding-right: 6px;
    font-size: 17.500px;
    line-height: 32px;
    letter-spacing: -0.400px;
}
.tray .notif {
    width: 66px;
    height: 72px;
}
```

FILE: chart.js
```js
var plot = document.getElementById("plot");
var UP = "#089981";
var DOWN = "#f23645";
var X0 = 146.32;
var STEP = 3.895;
var out = "";

function rect(x, y, w, h, fill, extra) {
    out += '<rect x="' + x + '" y="' + y + '" width="' + w + '" height="' + h + '" fill="' + fill + '" ' + (extra || "") + '/>';
}
function text(x, y, str, cls, len, extra) {
    out += '<text x="' + x + '" y="' + y + '" class="' + cls + '"' + (len ? ' textLength="' + len + '" lengthAdjust="spacingAndGlyphs"' : "") + ' ' + (extra || "") + '>' + str + '</text>';
}

// each candle: colour, high, body top, body bottom, low (3 ticks per px, below base)
var series = [
    { base: 580, rows: "g930,939,984,984 g577,577,942,942 g297,486,582,650 r444,486,537,573 r525,534,591,594 r531,588,615,642 r588,612,633,633 g543,567,633,633 g507,531,570,570 g483,531,533,564 r492,531,558,567 g507,516,558,558 r480,516,546,564 r516,543,591,591 g528,543,591,602 g429,453,546,564 r276,453,564,578 r525,561,720,762 g618,627,720,735 g537,561,630,639 g477,495,564,585 r495,495,675,678 g612,624,675,693 g588,612,627,636 g525,570,615,621 r567,570,684,684 g651,681,684,717 r666,681,741,774 g705,711,741,816 g651,681,714,738 r669,681,702,732 r696,699,750,755 g675,699,750,768 g678,690,702,738 r669,690,702,705 g609,639,702,726 g567,576,642,672 r576,576,636,636 r618,633,666,687 g621,633,666,687 r615,633,744,780 g639,669,744,804 g387,438,672,711 r378,438,453,531 g345,390,453,456 r384,390,498,528 g402,447,498,525 g366,375,450,471 r312,375,411,438 r210,408,486,486 r465,483,519,564 g462,477,519,567 g381,432,480,543 r402,432,480,486 r462,477,501,513 g420,444,501,510 g408,441,443,468 r429,441,516,516 r507,513,591,600 g522,558,591,600 g498,519,561,564 g486,489,522,534 g411,441,492,492 g366,411,444,468 g375,396,414,492 g207,264,399,411 r177,264,369,390 g228,243,369,381 g210,216,246,288 r207,216,222,270 g183,189,222,264 g144,162,192,231 r159,162,201,258 r186,198,273,309 g249,252,273,291 r252,252,285,291 g243,252,285,318 g222,249,251,264 r225,249,276,285 r252,273,291,315 r279,288,309,315 g294,297,309,330 r282,297,303,318 r288,300,321,324 g264,264,321,330 r261,264,282,297 g261,264,282,282 g246,255,267,285 r255,255,324,354 g294,309,324,330 g267,276,312,315 g195,234,279,285 g204,222,237,255 g78,117,225,234 g63,87,120,135 r87,87,180,192 g117,147,180,198 r111,147,159,189 r156,156,237,264 g216,225,237,270 r210,225,552,627 g474,522,552,615 r501,522,564,564 r540,561,594,594 g519,534,594,600 r525,534,549,552 r528,546,548,564 r513,546,555,561 r552,552,579,585 r540,576,597,615 g570,591,597,603 r582,591,681,681 r663,678,723,726 r675,720,756,765 g711,720,756,786 g705,711,723,738 g651,663,714,720 r648,663,665,684 r645,666,681,681 g597,621,681,705 g594,615,624,660 r612,615,720,807 r717,717,759,792 g636,657,759,783 g645,651,660,690 r633,651,681,699 r660,678,705,714 r663,702,723,729 r714,720,722,771 g672,693,726,726 r681,693,741,768 r729,738,771,795 g717,744,771,771 r732,744,753,768 g696,711,753,756 g645,678,714,750 g537,546,681,738 g378,378,549,612 r363,378,504,549 g369,423,504,543 r333,423,438,453 g366,372,438,456 g135,168,375,402 r153,171,213,240 g159,201,213,225" },
    { base: 400, rows: "g387,414,744,744 r351,414,465,465 r438,462,522,534 g459,468,522,567 r423,468,483,492 g444,456,483,498 r441,456,471,477 r456,468,510,522 g432,438,510,510 g345,432,441,459 g348,387,435,450 r366,387,444,456 r417,441,480,480 g453,471,480,486 g447,453,474,492 g207,210,456,462 r93,210,330,330 g228,258,330,429 r174,258,411,435 g342,387,411,501 r372,387,537,603 g465,504,537,582 r456,504,537,552 g483,492,537,567 r471,492,555,600 g504,525,555,555 g402,426,528,528 g378,417,429,441 r399,417,486,513 g471,477,486,516 r456,477,479,495 r456,480,555,588 r546,552,582,588 r552,579,621,666 g516,531,621,630 r516,531,555,576 r498,552,588,603 g498,510,588,588 g450,495,513,543 r456,495,543,597 g441,522,543,594 r489,522,594,651 g516,570,594,609 g501,525,573,576 g465,468,528,540 g264,327,471,474 r321,327,369,441 r363,366,390,432 g234,336,390,390 r336,336,375,414 g357,372,374,453 r372,372,411,453 g267,354,411,420 g294,354,357,360 g288,342,357,390 g297,318,345,351 g303,318,320,363 r309,318,399,411 r387,396,405,441 r351,402,423,423 r408,420,489,492 g405,426,489,492 g357,414,429,429 r321,414,606,711 g510,561,606,687 g357,399,564,570 r345,399,519,540" },
    { base: 240, rows: "g936,957,999,1056 g789,804,960,981 g717,732,807,873 r687,732,762,810 r744,759,828,858 r783,825,843,846 g768,774,843,846 r774,774,825,834 r801,822,870,906 r855,867,879,915 r846,876,900,900 g837,855,900,903 r855,855,894,909 g819,822,894,900 g789,792,825,825 g609,633,795,810 r498,633,635,690 r609,633,750,786 g672,675,750,753 g522,528,678,687 g261,279,531,567 g117,153,282,351 r129,153,180,255 g54,162,180,195 r147,162,240,333 r228,237,321,336 g249,267,321,354 r216,267,282,318 g243,255,282,291 r240,255,291,294 r288,288,342,375 g297,318,342,360 g282,306,321,330 g261,288,309,327 r288,288,357,363 g318,333,357,381 g291,324,336,336 g306,324,326,342 r324,324,360,381 r345,357,417,468 r414,414,450,489 r447,447,543,552 r540,540,576,636 g513,534,576,576 r534,534,558,627 g516,525,558,591 r501,525,546,582 r534,543,597,651 r591,594,624,633 r618,621,663,708 r627,660,662,678 g621,639,666,672 g618,624,642,672 r612,624,626,672 r606,624,654,654 g618,651,654,684 r627,651,672,705 r645,669,699,717 g663,693,699,729 g630,669,696,696" }
];

// grid
var prices = [207, 283, 358, 434, 510, 585, 661, 736, 812, 888];
prices.forEach(function (y) { rect(84, y, 1655, 1, "#f2f2f2"); });
for (var d = 0; d < 18; d++) {
    rect(Math.floor(X0 + d * STEP * 24), 194, 1, 714, "#f2f2f2");
}

// drawings
rect(84, 772, 1655, 3, "#4caf50");
rect(1158.500, 427.500, 117, 20, "#9c27b0", 'fill-opacity=".2" stroke="#9c27b0" stroke-width="3"');
rect(1158.500, 483.500, 113, 18, "#9c27b0", 'fill-opacity=".2" stroke="#9c27b0" stroke-width="3"');

// candles
var i = -3;
series.forEach(function (s) {
    s.rows.split(" ").forEach(function (row) {
        var v = row.slice(1).split(",").map(function (n) { return s.base + Math.round(n / 3); });
        var x = Math.floor(X0 + i * STEP);
        var color = row[0] === "g" ? UP : DOWN;
        rect(x, v[0], 1, v[3] - v[0], color);
        rect(x - 1, v[1], 3, Math.max(1, v[2] - v[1]), color);
        i++;
    });
});
out += '<path d="M84 463.500H1653" stroke="#089981" stroke-dasharray="1 2"/>';

// price axis
prices.forEach(function (y, n) { text(1753, y + 4.800, (79 - n) + ",000.00", "axis", 79); });
out += '<path d="M1740 760h97q2 0 2 2v23q0 2-2 2h-97z" fill="#4caf50"/>';
text(1753, 779, "71,518.22", "axis bold white", 79);
rect(1653, 450, 86, 27, UP, 'rx="2"');
text(1658, 470, "BTCUSDT", "axis bold white", 73);
out += '<path d="M1740 450h97q2 0 2 2v44q0 2-2 2h-97z" fill="#089981"/>';
text(1753, 469, "75,611.08", "axis bold white", 79);
text(1753, 490, "21:24", "axis white bold", 45, 'opacity=".75"');
rect(1706, 433, 33, 33, "#0f0f0f", 'rx="2"');
rect(1740, 433, 99, 33, "#0f0f0f", 'rx="2"');
out += '<g fill="none" stroke="#fff" stroke-width="1.200"><circle cx="1722.500" cy="449.500" r="10.800"/><path d="M1722.500 443v13M1716 449.500h13"/></g>';
text(1753, 455, "75,802.47", "axis bold white", 79);

// time axis
["8", "9", "10", "11", "12", "13", "14", "15", "16", "17", "18", "19", "20", "", "", "23", "24"].forEach(function (label, n) {
    if (label) {
        text(145.700 + n * 93.480, 935.500, label, "axis mid" + (label === "13" || label === "20" ? " bold" : ""), label.length * 9.300);
    }
});
out += '<svg x="1720" y="908" width="19" height="40" viewBox="1720 908 19 40">';
text(1726, 935.500, "25", "axis", 18.600);
out += '</svg>';
rect(1296, 908, 199, 36, "#0f0f0f", 'rx="2"');
text(1309, 936, "Tue 21 Apr '26", "axis white bold", 113);
text(1438, 936, "09:00", "axis white bold", 44);
out += '<g fill="none" stroke="#0f0f0f" stroke-width="1.500"><path d="M1788 921h10.500l5 9-5 9H1788l-5-9z"/><circle cx="1793.300" cy="930" r="3.300"/></g>';

// event marker
out += '<circle cx="1190.500" cy="888.500" r="14.500" fill="#fff" stroke="#9c27b0" stroke-width="2"/><path d="M1193 879.500l-9 10h6l-2.500 8 9.500-10h-6.500z" fill="#9c27b0"/><circle cx="1201" cy="878" r="5" fill="#f23645" stroke="#fff" stroke-width="1.500"/>';

// watermark
out += '<path class="halo" d="M102 865h18v22h-9v-13h-9zM134.500 865H147l-9 22h-10.500z"/><circle class="halo" cx="127.500" cy="869.500" r="4.500"/><path d="M134.500 865H147l-9 22h-10.500z"/>';
text(157, 886.500, "TradingView", "logo halo", 182);

plot.innerHTML = out;
```
